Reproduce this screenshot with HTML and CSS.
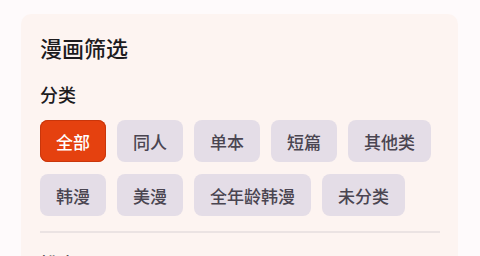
FILE: index.html
```html
<!DOCTYPE html>
<html lang="zh-CN">
<head>
<meta charset="utf-8">
<link rel="stylesheet" href="styles.css">
</head>
<body>
<div class="card">
  <div class="title">漫画筛选</div>
  <div class="label">分类</div>
  <div class="chips">
    <span class="chip active">全部</span>
    <span class="chip">同人</span>
    <span class="chip">单本</span>
    <span class="chip">短篇</span>
    <span class="chip">其他类</span>
    <span class="chip">韩漫</span>
    <span class="chip">美漫</span>
    <span class="chip">全年龄韩漫</span>
    <span class="chip">未分类</span>
  </div>
  <div class="divider"></div>
  <div class="label label2">排序</div>
</div>
</body>
</html>
```
FILE: styles.css
```css
html, body {
  margin: 0;
  padding: 0;
  background: #fefafb;
  font-family: "Noto Sans CJK SC", "Noto Sans", sans-serif;
  overflow: hidden;
  height: 256px;
}
.card {
  margin: 14px 0 0 21px;
  width: 437px;
  box-sizing: border-box;
  padding: 18px 18px 20px 19px;
  background: #fdf4f1;
  border-radius: 10px;
  height: 300px;
}
.title {
  font-size: 22px;
  line-height: 30px;
  font-weight: 500;
  color: #1d1b1e;
}
.label {
  margin-top: 19px;
  font-size: 18px;
  line-height: 26px;
  font-weight: 500;
  color: #1d1b1e;
}
.label2 {
  margin-top: 17px;
}
.chips {
  margin-top: 13px;
  display: flex;
  flex-wrap: wrap;
  column-gap: 11px;
  row-gap: 12px;
  width: 400px;
}
.chip {
  height: 42px;
  box-sizing: border-box;
  padding: 0 16px;
  display: flex;
  align-items: center;
  font-size: 17px;
  font-weight: 500;
  color: #4a4551;
  background: #e4dde7;
  border-radius: 8px;
}
.chip.active {
  background: #e5410f;
  color: #ffffff;
  box-shadow: inset 0 0 0 1px #c9360b;
}
.divider {
  margin-top: 15px;
  width: 400px;
  height: 2px;
  background: #ebe3e3;
}
```
